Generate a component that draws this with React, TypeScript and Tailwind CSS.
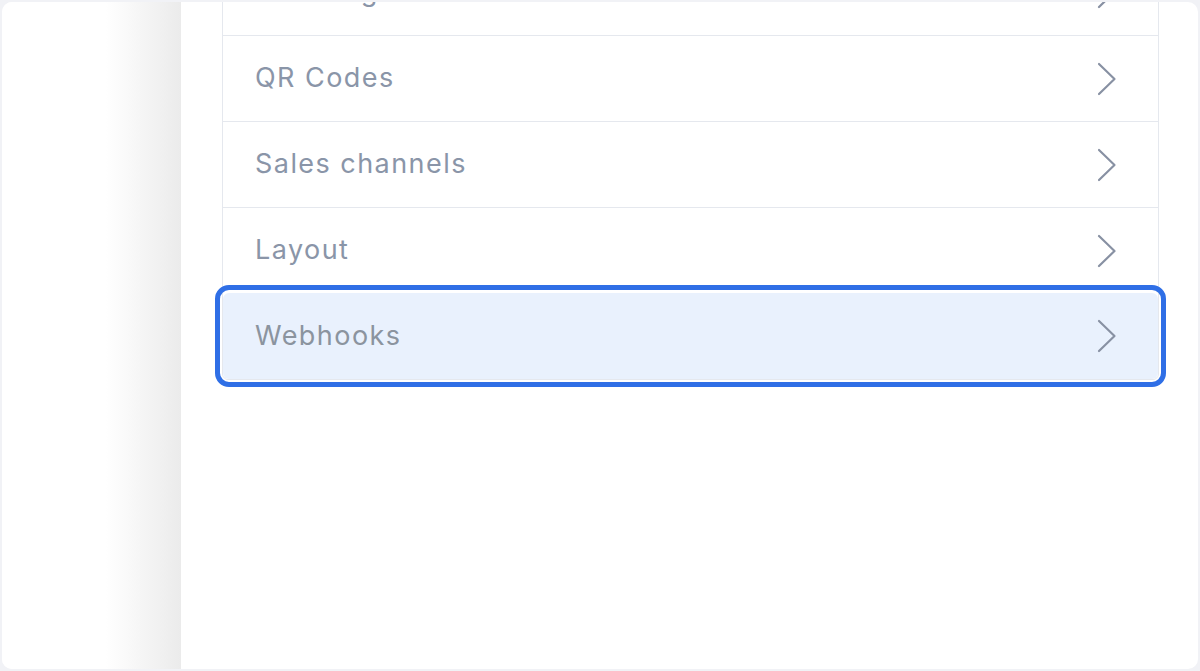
import React from "react";

const rows = [
  { label: "Ordering", active: false },
  { label: "QR Codes", active: false },
  { label: "Sales channels", active: false },
  { label: "Layout", active: false },
  { label: "Webhooks", active: true },
];

const Chevron = () => (
  <svg width="20" height="34" viewBox="0 0 20 34" fill="none" className="shrink-0">
    <polyline
      points="2,2 17.5,17 2,32"
      stroke="#8891a3"
      strokeWidth="2.2"
      strokeLinecap="round"
      strokeLinejoin="round"
    />
  </svg>
);

export default function App() {
  return (
    <div className="h-[671px] w-[1200px] bg-[#f1f2f6] p-[2px] font-['Inter',sans-serif]">
      <div className="flex h-full overflow-hidden rounded-[10px] bg-white">
        <div className="w-[179px] shrink-0 bg-[linear-gradient(to_right,#ffffff_58%,#ebebeb)]" />
        <div className="flex-1 overflow-hidden pl-[41px] pr-[39px]">
          <div className="-mt-[54px] rounded-b-md border border-[#e5e8ee]">
            {rows.map((row, i) =>
              row.active ? (
                <div
                  key={row.label}
                  className="flex h-[86px] items-center justify-between rounded-md bg-[#e9f1fd] pl-[32px] pr-[41px] outline-[5px] outline-offset-[3px] outline-[#2f6fe6]"
                >
                  <span className="text-[27px] tracking-[1.45px] text-[#8b949f]">{row.label}</span>
                  <Chevron />
                </div>
              ) : (
                <div
                  key={row.label}
                  className={`flex h-[86px] items-center justify-between pl-[32px] pr-[41px] ${i > 0 ? "border-t border-[#e5e8ee]" : ""}`}
                >
                  <span className="text-[27px] tracking-[1.45px] text-[#8a95a8]">{row.label}</span>
                  <Chevron />
                </div>
              )
            )}
          </div>
        </div>
      </div>
    </div>
  );
}
